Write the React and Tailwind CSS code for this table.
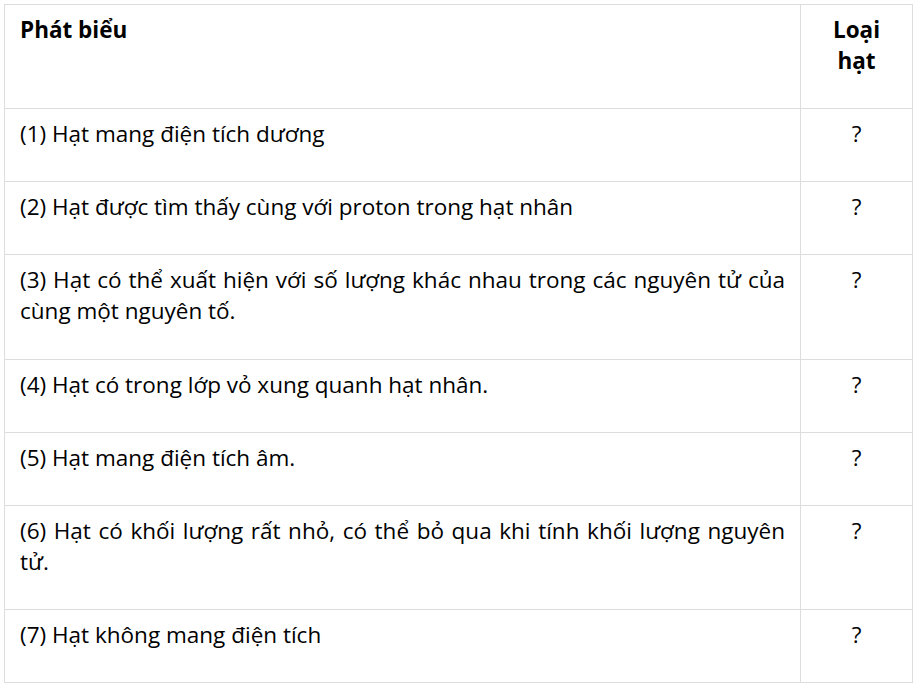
import React from 'react';

const rows = [
  '(1) Hạt mang điện tích dương',
  '(2) Hạt được tìm thấy cùng với proton trong hạt nhân',
  '(3) Hạt có thể xuất hiện với số lượng khác nhau trong các nguyên tử của cùng một nguyên tố.',
  '(4) Hạt có trong lớp vỏ xung quanh hạt nhân.',
  '(5) Hạt mang điện tích âm.',
  '(6) Hạt có khối lượng rất nhỏ, có thể bỏ qua khi tính khối lượng nguyên tử.',
  '(7) Hạt không mang điện tích',
];

const cell = 'border border-[#dddddd] align-top px-[15px] pt-[9px] pb-[32.15px] leading-[31px]';

export default function App() {
  return (
    <div className="bg-white min-h-[685px] p-1 text-black text-[22.5px] font-['Open_Sans',sans-serif]">
      <table className="border-collapse w-[908px] table-fixed">
        <colgroup>
          <col className="w-[796px]" />
          <col className="w-[112px]" />
        </colgroup>
        <thead>
          <tr>
            <th className={`${cell} text-left font-bold`}>Phát biểu</th>
            <th className={`${cell} text-center font-bold`}>
              Loại
              <br />
              hạt
            </th>
          </tr>
        </thead>
        <tbody>
          {rows.map((text) => (
            <tr key={text}>
              <td className={`${cell} text-justify`}>{text}</td>
              <td className={`${cell} text-center`}>?</td>
            </tr>
          ))}
        </tbody>
      </table>
    </div>
  );
}
